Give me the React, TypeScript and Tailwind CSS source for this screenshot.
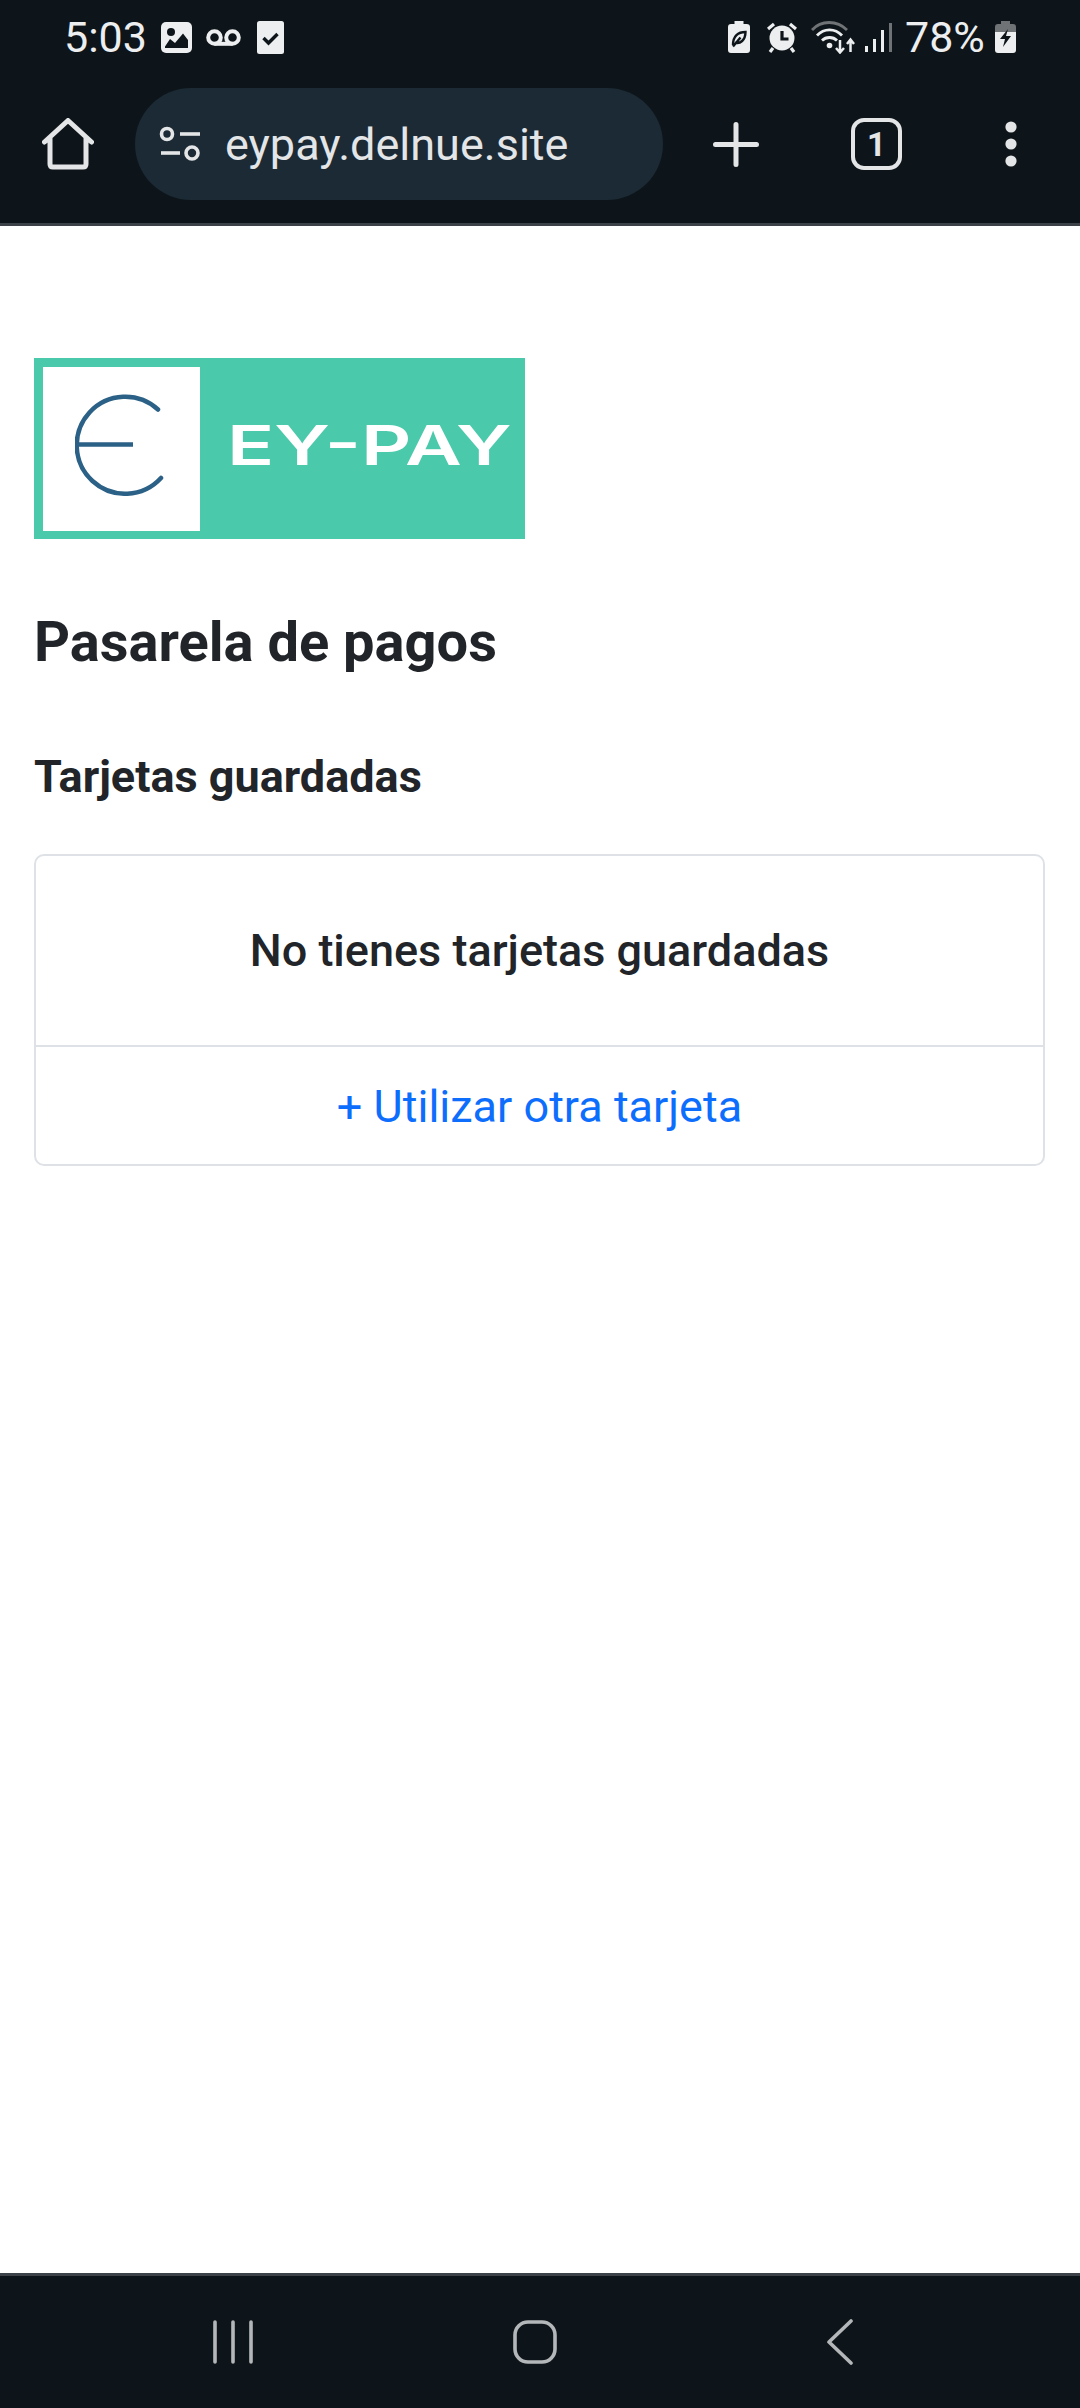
export default function App() {
  const roboto = "font-['Roboto',sans-serif]";
  return (
    <div className={`flex h-[2408px] w-[1080px] flex-col overflow-hidden bg-white ${roboto}`}>
      <header className="h-[226px] shrink-0 border-b-[3px] border-[#3c4247] bg-[#0e151a]">
        {/* status bar */}
        <div className="flex h-[74px] items-center text-[#eceeef] [&>*]:shrink-0">
          <span className="ml-[64px] w-[79px] text-[43px] leading-none">5:03</span>
          <svg className="ml-[18px]" width="31" height="31" viewBox="0 0 31 31">
            <rect width="31" height="31" rx="5" fill="#eceeef" />
            <circle cx="10" cy="10" r="4" fill="#0e151a" />
            <path d="M4 26V24.500L9 17L14 21L22 11.500L27 18V26Z" fill="#0e151a" />
          </svg>
          <svg className="ml-[14px]" width="35" height="17" viewBox="0 0 35 17" fill="none">
            <circle cx="8.500" cy="8.500" r="6.300" stroke="#eceeef" strokeWidth="4" />
            <circle cx="26.500" cy="8.500" r="6.300" stroke="#eceeef" strokeWidth="4" />
            <path d="M8.500 14.800H26.500" stroke="#eceeef" strokeWidth="4" />
          </svg>
          <svg className="ml-[16px]" width="27" height="33" viewBox="0 0 27 33">
            <rect width="27" height="33" rx="2.500" fill="#eceeef" />
            <path d="M6.500 17 L11.500 22 L20.500 13" stroke="#0e151a" strokeWidth="3.400" fill="none" />
          </svg>
          <svg className="ml-[444px]" width="22" height="32" viewBox="0 0 22 32">
            <path d="M6.500 0h9v3h3q3.500 0 3.500 3v23q0 3-3 3H3q-3 0-3-3V6q0-3 3-3h3.500Z" fill="#eceeef" />
            <path d="M5 24C5 15 10 11 17.500 11C17.500 19 12 23.500 7 21.500M5 25.500L12.500 16.500" stroke="#0e151a" strokeWidth="2.400" fill="none" />
          </svg>
          <svg className="ml-[17px]" width="30" height="31" viewBox="0 0 30 31">
            <circle cx="15" cy="16" r="12.500" fill="#eceeef" />
            <path d="M15 9V17H21.500" stroke="#0e151a" strokeWidth="3.200" fill="none" />
            <path d="M1 7L7 2M29 7L23 2M6 26L3 30M24 26L27 30" stroke="#eceeef" strokeWidth="3.200" fill="none" />
          </svg>
          <svg className="ml-[14px]" width="44" height="33" viewBox="0 0 44 33" fill="none">
            <path d="M1 9C10 -1 26 -1 36 9" stroke="#6f7376" strokeWidth="2.800" />
            <path d="M6 14.500C13 7 24 7 31 14.500" stroke="#eceeef" strokeWidth="2.800" />
            <path d="M11 19.500C15 15.500 22 15.500 26 19.500" stroke="#eceeef" strokeWidth="2.800" />
            <circle cx="18.500" cy="24.500" r="2.800" fill="#eceeef" />
            <path d="M29 19V31M25 27L29 31.500L33 27" stroke="#eceeef" strokeWidth="2.500" />
            <path d="M39.500 31V19M36 23L39.500 18.500L43 23" stroke="#eceeef" strokeWidth="2.500" />
          </svg>
          <svg className="ml-[10px]" width="27" height="31" viewBox="0 0 27 31" fill="none">
            <path d="M1.500 24V30" stroke="#eceeef" strokeWidth="3" />
            <path d="M9.500 17V30" stroke="#eceeef" strokeWidth="3" />
            <path d="M17.500 8V30" stroke="#eceeef" strokeWidth="3" />
            <path d="M25.500 1V30" stroke="#6f7376" strokeWidth="3" />
          </svg>
          <span className="ml-[13px] w-[81px] text-[43px] leading-none">78%</span>
          <svg className="ml-[9px]" width="21" height="32" viewBox="0 0 21 32">
            <path d="M6 0h9v3h3q3 0 3 3v6H0V6q0-3 3-3h3Z" fill="#6f7376" />
            <path d="M0 11H21V29q0 3-3 3H3q-3 0-3-3Z" fill="#eceeef" />
            <path d="M13 8L5 18H10L8 26L16 15H11Z" fill="#0e151a" />
          </svg>
        </div>
        {/* toolbar */}
        <div className="mt-[14px] flex h-[112px] items-center [&>*]:shrink-0">
          <svg className="ml-[42px]" width="52" height="52" viewBox="0 0 52 52" fill="none">
            <path d="M2.500 24L26 2.500L49.500 24M8 20V46Q8 49 11 49H41Q44 49 44 46V20" stroke="#e3e5e7" strokeWidth="5" strokeLinejoin="round" strokeLinecap="round" />
          </svg>
          <div className="ml-[41px] flex h-[112px] w-[528px] items-center rounded-full bg-[#1b2a35]">
            <svg className="ml-[24px]" width="42" height="36" viewBox="0 0 42 36" fill="none">
              <circle cx="8" cy="8" r="5.500" stroke="#e3e5e7" strokeWidth="3.600" />
              <path d="M21 8H41" stroke="#e3e5e7" strokeWidth="3.600" />
              <path d="M2 27H21" stroke="#e3e5e7" strokeWidth="3.600" />
              <circle cx="33" cy="27" r="6" stroke="#e3e5e7" strokeWidth="3.600" />
            </svg>
            <span className="ml-[24px] text-[45px] leading-none text-[#e3e5e7]">eypay.delnue.site</span>
          </div>
          <svg className="ml-[50px]" width="46" height="45" viewBox="0 0 46 45" fill="none">
            <path d="M23 2.500V42.500M2.500 22.500H43.500" stroke="#e3e5e7" strokeWidth="5" strokeLinecap="round" />
          </svg>
          <div className="ml-[92px] flex h-[52px] w-[51px] items-center justify-center rounded-[13px] border-[4px] border-[#e3e5e7] text-[33px] font-bold leading-none text-[#e3e5e7]">
            1
          </div>
          <svg className="ml-[103px]" width="12" height="46" viewBox="0 0 12 46">
            <circle cx="6" cy="6" r="5.600" fill="#e3e5e7" />
            <circle cx="6" cy="23" r="5.600" fill="#e3e5e7" />
            <circle cx="6" cy="40" r="5.600" fill="#e3e5e7" />
          </svg>
        </div>
      </header>

      <main className="flex-1 px-[34px] pt-[132px] text-[#212529]">
        {/* logo */}
        <div className="flex h-[181px] w-[491px] bg-[#4bc9ab]">
          <div className="ml-[9px] mt-[9px] flex h-[164px] w-[157px] shrink-0 items-center justify-center bg-white pb-[9px] pr-[4px]">
            <svg width="90" height="102" viewBox="0 0 90 102" fill="none">
              <path d="M83 15.500A48.500 48.500 0 1 0 86 84" stroke="#2b6186" strokeWidth="4.500" strokeLinecap="round" />
              <path d="M2 50.500H58" stroke="#2b6186" strokeWidth="4.500" />
            </svg>
          </div>
          <span className="ml-[27px] mt-[55px] h-[64px] origin-left scale-x-[1.42] whitespace-nowrap font-['Inter',sans-serif] text-[55px] font-semibold leading-[64px] text-white">
            EY-PAY
          </span>
        </div>

        <h1 className="mt-[72px] text-[56px] font-bold leading-[62px]">Pasarela de pagos</h1>
        <h2 className="mt-[79px] text-[45px] font-bold leading-[50px]">Tarjetas guardadas</h2>

        <div className="mt-[52px] h-[312px] w-[1011px] rounded-[10px] border-2 border-[#dee2e6]">
          <div className="flex h-[191px] items-center justify-center border-b-2 border-[#dee2e6] text-[45px] font-medium">
            No tienes tarjetas guardadas
          </div>
          <div className="flex h-[117px] items-center justify-center pt-[3px] text-[45px] text-[#0d6efd]">
            + Utilizar otra tarjeta
          </div>
        </div>
      </main>

      <footer className="flex h-[135px] shrink-0 items-center border-t-[3px] border-[#3c4247] bg-[#0e151a] pb-[1px]">
        <svg className="ml-[212px]" width="42" height="44" viewBox="0 0 42 44" fill="none">
          <path d="M3 2V42M21 2V42M39 2V42" stroke="#b4b7b9" strokeWidth="3.600" strokeLinecap="round" />
        </svg>
        <svg className="ml-[259px]" width="44" height="44" viewBox="0 0 44 44" fill="none">
          <rect x="2" y="2" width="40" height="40" rx="13" stroke="#b4b7b9" strokeWidth="3.600" />
        </svg>
        <svg className="ml-[269px]" width="28" height="46" viewBox="0 0 28 46" fill="none">
          <path d="M25 2L3 23L25 44" stroke="#b4b7b9" strokeWidth="3.600" strokeLinecap="round" strokeLinejoin="round" />
        </svg>
      </footer>
    </div>
  );
}
